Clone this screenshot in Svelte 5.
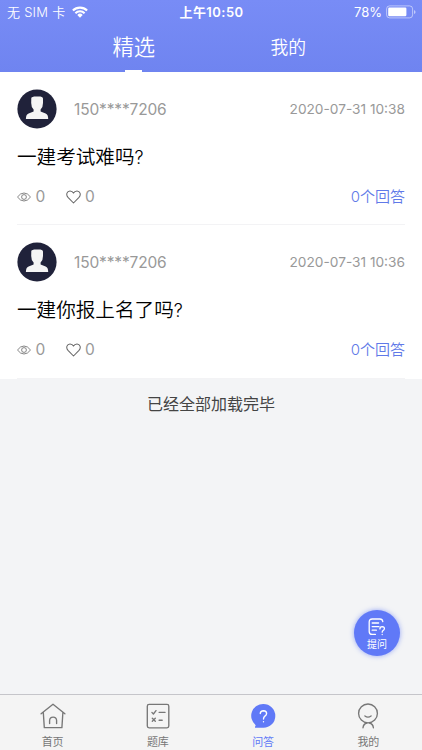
<script>
  const tabs = ['精选', '我的'];
  const posts = [
    { user: '150****7206', time: '2020-07-31 10:38', title: '一建考试难吗', views: 0, likes: 0, answers: 0 },
    { user: '150****7206', time: '2020-07-31 10:36', title: '一建你报上名了吗', views: 0, likes: 0, answers: 0 }
  ];
  const nav = [
    { id: 'home', label: '首页' },
    { id: 'bank', label: '题库' },
    { id: 'qa', label: '问答' },
    { id: 'me', label: '我的' }
  ];
  const active = 'qa';
</script>

<div class="app">
  <header>
    <div class="status">
      <div class="carrier">
        <span>无 SIM 卡</span>
        <svg width="16" height="12" viewBox="0 0 16 12">
          <g fill="none" stroke="#fff" stroke-width="2.1">
            <path d="M0.9 4.6 A10 10 0 0 1 15.1 4.6" />
            <path d="M3.4 7.2 A6.5 6.5 0 0 1 12.6 7.2" />
          </g>
          <path d="M5.3 8.9 A3.9 3.9 0 0 1 10.7 8.9 L8 11.7 Z" fill="#fff" />
        </svg>
      </div>
      <div class="clock">上午10:50</div>
      <div class="power">
        <span>78%</span>
        <svg width="30" height="14" viewBox="0 0 30 14">
          <rect x="0.6" y="0.9" width="26" height="12" rx="3" fill="none" stroke="#fff" stroke-opacity=".5" />
          <rect x="2.2" y="2.6" width="18.2" height="8.6" rx="1.2" fill="#fff" />
          <path d="M28 4.9 Q29.6 5.6 29.6 7 T28 9.1 Z" fill="#fff" fill-opacity=".55" />
        </svg>
      </div>
    </div>
    <div class="tabs">
      {#each tabs as tab, i}
        <div class="tab" class:selected={i === 0}><span>{tab}</span></div>
      {/each}
    </div>
  </header>

  <main>
    {#each posts as post}
      <article>
        <div class="author">
          <svg class="avatar" width="40" height="40" viewBox="0 0 40 40">
            <circle cx="20" cy="20" r="19.6" fill="#20223a" />
            <path d="M14.3 9 Q14.6 8 15.8 8 L17 7.4 H23.5 Q26 7.6 26 9.5 V14 Q26 18.5 23.6 20.5 V22.6 L28.6 24.6 Q31.2 25.6 31.2 30 H8.9 Q8.9 25.6 11.6 24.6 L16.6 22.6 V20.5 Q14.2 18.5 14.2 14 Z" fill="#f5f5f5" />
          </svg>
          <span class="user">{post.user}</span>
          <time>{post.time}</time>
        </div>
        <h2>{post.title}<i>?</i></h2>
        <div class="meta">
          <svg width="14" height="10" viewBox="0 0 14 10" fill="none" stroke="#777" stroke-width=".9">
            <path d="M.5 5 Q3.3 1 7 1 T13.5 5 Q10.7 9 7 9 T.5 5 Z" />
            <circle cx="7" cy="5" r="2.4" />
          </svg>
          <span class="count views">{post.views}</span>
          <svg width="15" height="14" viewBox="0 0 15 14" fill="none" stroke="#686868" stroke-width="1.05">
            <path d="M7.5 13 L2 7.4 C-.4 4.7 1 .9 4 .9 C5.8 .9 7 2 7.5 3.1 C8 2 9.2 .9 11 .9 C14 .9 15.4 4.7 13 7.4 Z" stroke-linejoin="round" />
          </svg>
          <span class="count">{post.likes}</span>
          <span class="answers">{post.answers}个回答</span>
        </div>
      </article>
    {/each}
  </main>

  <p class="end">已经全部加载完毕</p>

  <button class="ask">
    <svg width="18" height="18" viewBox="0 0 18 18" fill="none" stroke="#fff" stroke-width="1.3" stroke-linecap="round">
      <path d="M14.8 3.6 Q14.4 1 12 1 H4.2 Q1.2 1 1.2 4 V13.4 Q1.2 16.4 4.2 16.4 H7.4" />
      <path d="M4.2 5 H10.6 M4.2 8.6 H11 M4.2 12.2 H8.4" />
      <path d="M11.9 10.9 Q11.9 8.7 14.2 8.7 Q16.6 8.8 16.4 10.8 Q16.3 11.9 15 12.6 Q14.2 13.2 14.2 14.2 M14.2 16.5 V16.6" />
    </svg>
    <span>提问</span>
  </button>

  <nav>
    {#each nav as item}
      <div class="item" class:active={item.id === active}>
        <svg width="26" height="26" viewBox="0 0 26 26" fill="none" stroke="#777" stroke-width="1.35" stroke-linecap="round" stroke-linejoin="round">
          {#if item.id === 'home'}
            <path d="M1.1 10.8 L13 1.2 L24.9 10.8 M3.3 9.2 L4.3 24.6 H21.9 L22.9 9.2" />
            <path d="M9.6 20.6 V17.5 Q9.8 14.1 13.1 14.1 Q16.4 14.1 16.6 17.5 V20.6" />
          {:else if item.id === 'bank'}
            <rect x="2.3" y="1.4" width="21.5" height="23.4" rx="1.8" />
            <path d="M6.9 9.4 L8.4 11 L11 7.6 M14.1 9.3 H20.1 M7.3 15.3 L10.3 18.3 M10.3 15.3 L7.3 18.3 M14.1 17.2 H17.2" />
          {:else if item.id === 'qa'}
            <path d="M13.4 1 A11.9 11.9 0 1 1 13.4 24.8 H5.4 Q4.4 24.5 5.7 22.2 A11.9 11.9 0 0 1 13.4 1 Z" fill="#6079f7" stroke="none" />
            <path d="M10.3 10.6 Q10.4 7.7 13.5 7.7 Q16.6 7.8 16.6 10.5 Q16.5 12.1 14.9 13.2 Q13.5 14.2 13.5 16 M13.5 18.7 V18.8" stroke="#fff" stroke-width="1.4" />
          {:else}
            <circle cx="13" cy="10.4" r="9.4" />
            <path d="M9.9 13 Q13 15.2 16.1 13 M11.9 20 Q8.4 20.8 8 24.8 M14.4 20 Q18 20.8 18.4 24.8" />
          {/if}
        </svg>
        <span>{item.label}</span>
      </div>
    {/each}
  </nav>
</div>

<style>
  :global(body) { margin: 0; }
  .app {
    position: relative;
    display: flex;
    flex-direction: column;
    width: 422px;
    height: 750px;
    overflow: hidden;
    background: #f3f4f6;
    font-family: Inter, "Noto Sans CJK SC", sans-serif;
  }
  header {
    height: 72px;
    flex: none;
    color: #fff;
    background: linear-gradient(#788cf6, #6f84f0);
  }
  .status {
    display: grid;
    grid-template-columns: 1fr auto 1fr;
    align-items: center;
    height: 24px;
    padding: 0 6px 0 7px;
    font-size: 13px;
    line-height: 24px;
  }
  .carrier, .power { display: flex; align-items: center; }
  .carrier span { margin-right: 7px; font-weight: 350; letter-spacing: .25px; }
  .power { justify-content: flex-end; }
  .power span { margin-right: 4px; }
  .clock { font-weight: 600; letter-spacing: .45px; }
  .tabs { display: flex; justify-content: center; height: 48px; }
  .tab {
    display: flex;
    flex-direction: column;
    align-items: center;
    width: 154.5px;
    font-size: 17.8px;
    font-weight: 350;
    line-height: 48px;
  }
  .tab span { height: 46px; }
  .tab.selected { font-size: 21.3px; line-height: 47px; }
  .tab.selected::after { content: ''; width: 17px; height: 2px; background: #fff; }
  main { background: #fff; flex: none; height: 306.5px; }
  article {
    box-sizing: border-box;
    height: 153.3px;
    margin: 0 17px;
    padding-top: 17px;
    border-bottom: 1px solid #f3f3f5;
  }
  .author { display: flex; align-items: center; height: 40px; color: #999; }
  .user { margin-left: 17px; font-size: 15.5px; letter-spacing: -.15px; }
  time { margin-left: auto; font-size: 13.7px; }
  h2 {
    margin: 12px 0 0;
    height: 32px;
    color: #000;
    font-size: 19.6px;
    font-weight: 350;
    line-height: 32px;
  }
  h2 i { font-style: normal; font-size: 18px; }
  .meta { display: flex; align-items: center; height: 22px; margin-top: 13px; line-height: 22px; }
  .meta svg { margin-top: -1px; }
  .count { margin-left: 4.5px; color: #999; font-size: 15.5px; }
  .views { width: 30px; }
  .answers { margin-left: auto; color: #6079e8; font-size: 15px; font-weight: 350; }
  .end {
    margin: 13px 0 0;
    color: #444;
    text-align: center;
    font-size: 16px;
    line-height: 24px;
  }
  .ask {
    position: absolute;
    left: 354px;
    top: 610px;
    display: flex;
    flex-direction: column;
    align-items: center;
    width: 46px;
    height: 46px;
    padding: 8px 0 0;
    border: 0;
    border-radius: 50%;
    color: #fff;
    background: #6079f7;
    box-shadow: 0 0 5px rgba(96, 121, 247, .65);
    font-family: inherit;
    font-size: 10px;
    line-height: 16px;
  }
  nav {
    box-sizing: border-box;
    display: flex;
    height: 56px;
    margin-top: auto;
    padding-right: 1px;
    border-top: 1px solid #c5c5ca;
    background: #f4f4f4;
  }
  .item {
    display: flex;
    flex: 1;
    flex-direction: column;
    align-items: center;
    padding-top: 8px;
    color: #777;
    font-size: 11px;
    line-height: 26px;
  }
  .item svg { flex: none; }
  .item.active { color: #6079f7; }
</style>
